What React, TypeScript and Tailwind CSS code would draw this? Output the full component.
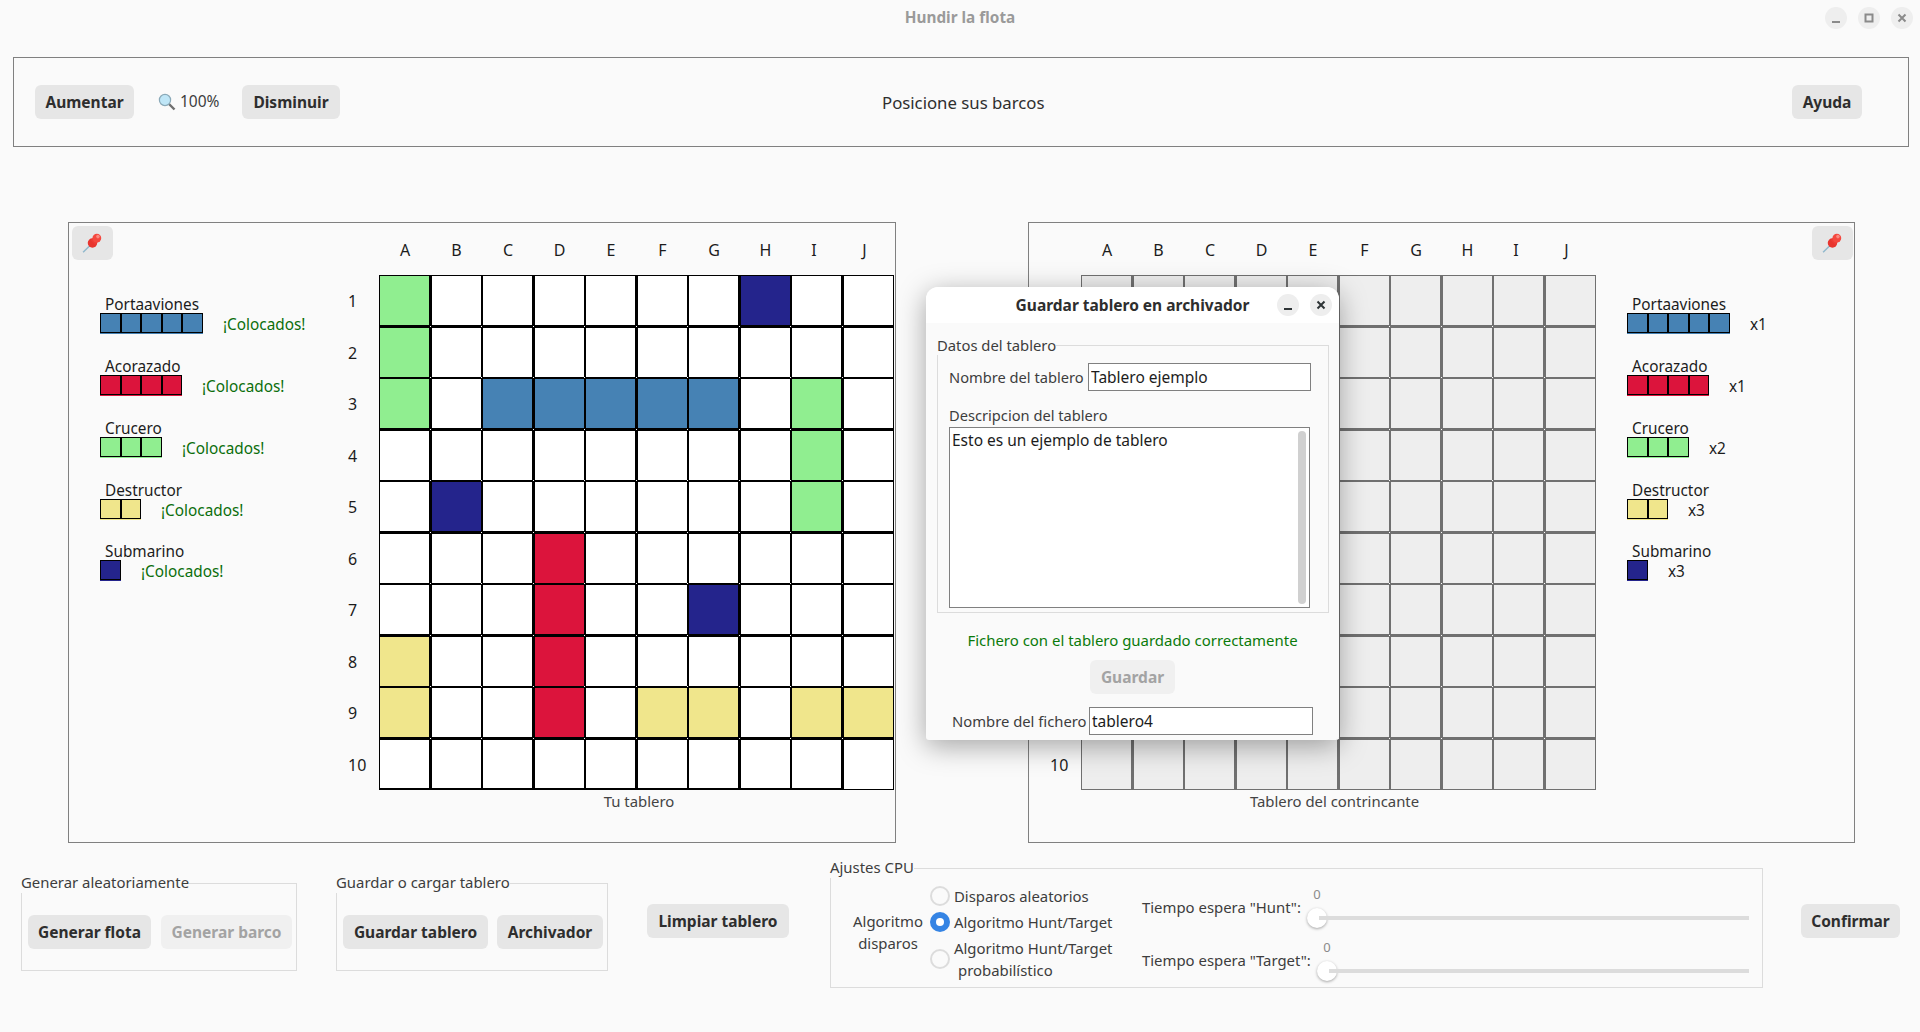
const LETTERS = ["A", "B", "C", "D", "E", "F", "G", "H", "I", "J"];

const FILLS: Record<string, string> = {
  g: "bg-[#90ee90]",
  b: "bg-[#4682b4]",
  r: "bg-[#dc143c]",
  y: "bg-[#f0e68c]",
  n: "bg-[#24248c]",
};

const MY_BOARD = [
  "g......n..",
  "g.........",
  "g.bbbbb.g.",
  "........g.",
  ".n......g.",
  "...r......",
  "...r..n...",
  "y..r......",
  "y..r.yy.yy",
  "..........",
];

const SHIPS = [
  { name: "Portaaviones", size: 5, fill: "b", count: "x1" },
  { name: "Acorazado", size: 4, fill: "r", count: "x1" },
  { name: "Crucero", size: 3, fill: "g", count: "x2" },
  { name: "Destructor", size: 2, fill: "y", count: "x3" },
  { name: "Submarino", size: 1, fill: "n", count: "x3" },
];

function Btn({ children, disabled, className }: { children: React.ReactNode; disabled?: boolean; className: string }) {
  return (
    <button
      className={`h-[34px] pt-[2px] rounded-md flex items-center justify-center font-bold text-[15.5px] ${
        disabled ? "bg-[#f0f0f0] text-[#a3a3a3]" : "bg-[#e6e6e6] text-[#2e2e2e]"
      } ${className}`}
    >
      {children}
    </button>
  );
}

function WinIcon({ kind, color }: { kind: "min" | "max" | "close"; color: string }) {
  return (
    <span className="w-[22px] h-[22px] rounded-full bg-[#eeeeee] flex items-center justify-center">
      <svg width="12" height="12" viewBox="0 0 12 12" fill="none" stroke={color} strokeWidth="2">
        {kind === "min" && <path d="M2 10h8" />}
        {kind === "max" && <rect x="2.5" y="2.5" width="7" height="7" />}
        {kind === "close" && <path d="M2.5 2.5l7 7M9.5 2.5l-7 7" />}
      </svg>
    </span>
  );
}

function PinButton({ className }: { className: string }) {
  return (
    <button className={`w-[41px] h-[34px] rounded-md bg-[#e6e6e6] flex items-center justify-center ${className}`}>
      <svg width="22" height="22" viewBox="0 0 20 20">
        <path d="M1 18.5l7-7" stroke="#8fb8cc" strokeWidth="1.3" />
        <circle cx="9.5" cy="10" r="4.3" fill="#e8352e" />
        <path d="M8 7.5l4-4 4 4-4 4z" fill="#ee3b35" />
        <circle cx="13.5" cy="5.5" r="4" fill="#f4483f" />
        <circle cx="14.5" cy="4.2" r="1.6" fill="#fb8a80" />
      </svg>
    </button>
  );
}

function Ship({ size, fill }: { size: number; fill: string }) {
  const cells = Array.from({ length: size });
  return (
    <div className={`flex w-fit h-fit pb-px ${FILLS[fill]}`}>
      {cells.map((_, i) => (
        <div key={i} className={`h-[20px] border border-black ${i % 2 === 0 ? "w-[21px]" : "w-[20px]"}`} />
      ))}
    </div>
  );
}

function ShipList({ placed }: { placed?: boolean }) {
  return (
    <div className="flex flex-col gap-[23px] mt-[35px]">
      {SHIPS.map((ship) => (
        <div key={ship.name} className="last:-mt-px">
          <div className="h-[18px] leading-[18px] pl-[5px] text-[15.33px] text-[#1c1c1c]">{ship.name}</div>
          <div className="flex h-[21px]">
            <Ship size={ship.size} fill={ship.fill} />
            <span className={`ml-[20px] mt-px leading-[20px] text-[15.33px] ${placed ? "text-[#0b6e0b]" : "text-[#1c1c1c]"}`}>
              {placed ? "¡Colocados!" : ship.count}
            </span>
          </div>
        </div>
      ))}
    </div>
  );
}

function Board({ rows, enemy, caption, captionClass }: { rows?: string[]; enemy?: boolean; caption: string; captionClass: string }) {
  const line = enemy ? "border-[#707070]" : "border-black";
  return (
    <div className="flex flex-col w-[556px]">
      <div className="flex pl-[41px] pt-[17px] h-[52px] text-[16px] text-[#1c1c1c]">
        {LETTERS.map((l, c) => (
          <span
            key={l}
            className={`h-[20px] leading-[20px] text-center ${c % 2 === 0 ? "w-[52px]" : "w-[51px]"} ${
              l === "I" ? "pr-[6px]" : l === "J" ? "pr-[8px]" : ""
            }`}
          >
            {l}
          </span>
        ))}
      </div>
      {Array.from({ length: 10 }).map((_, r) => (
        <div key={r} className="flex">
          <span
            className={`w-[41px] pl-[10px] flex items-center text-[16px] text-[#1c1c1c] ${
              r % 2 === 0 ? "h-[52px]" : "h-[51px]"
            }`}
          >
            {r + 1}
          </span>
          {LETTERS.map((l, c) => {
            const mark = rows ? rows[r][c] : ".";
            const bg = mark === "." ? (enemy ? "bg-[#eeeeee]" : "bg-white") : FILLS[mark];
            return (
              <div
                key={l}
                className={`relative border ${line} ${bg} ${c % 2 === 0 ? "w-[52px] border-r-2" : "w-[51px]"} ${
                  r % 2 === 0 ? "h-[52px] border-b-2" : "h-[51px]"
                } ${r === 9 && c < 9 && !enemy ? "border-b-2" : ""}`}
              >
                {r < 9 && c < 9 && (
                  <span
                    className={`absolute w-px h-px bg-white ${c % 2 === 0 ? "-right-[2px]" : "-right-px"} ${
                      r % 2 === 0 ? "-bottom-[2px]" : "-bottom-px"
                    }`}
                  />
                )}
              </div>
            );
          })}
        </div>
      ))}
      <div className={`mt-px h-[20px] leading-[20px] text-center text-[14.9px] text-[#444444] ${captionClass}`}>{caption}</div>
    </div>
  );
}

function Radio({ checked }: { checked?: boolean }) {
  if (checked) {
    return (
      <span className="w-[20px] h-[20px] rounded-full bg-[#3584e4] flex items-center justify-center shrink-0">
        <span className="w-[8px] h-[8px] rounded-full bg-white" />
      </span>
    );
  }
  return <span className="w-[20px] h-[20px] rounded-full border-2 border-[#dcdcdc] bg-[#fafafa] shrink-0" />;
}

function Slider({ label, labelWidth }: { label: string; labelWidth: string }) {
  return (
    <div className="flex">
      <span className={`mt-[13px] h-[20px] leading-[20px] text-[#3d3d3d] whitespace-nowrap ${labelWidth}`}>{label}</span>
      <div className="flex-1 flex flex-col gap-[4px]">
        <span className="w-[20px] h-[20px] leading-[20px] text-center text-[13px] text-[#8a8a8a]">0</span>
        <div className="flex items-center">
          <span className="w-[20px] h-[20px] rounded-full bg-white shadow-[0_1px_3px_rgba(0,0,0,0.35)] shrink-0" />
          <span className="-ml-[8px] flex-1 h-[4px] bg-[#dcdcdc]" />
        </div>
      </div>
    </div>
  );
}

function SaveDialog() {
  return (
    <div className="absolute left-[926px] top-[287px] w-[413px] h-[453px] rounded-t-xl rounded-b-[3px] bg-[#fafafa] shadow-[0_6px_28px_rgba(0,0,0,0.35)] overflow-hidden text-[14.67px] text-[#3d3d3d]">
      <div className="h-[36px] pt-px bg-white flex items-center">
        <span className="w-[413px] text-center font-bold text-[15.5px] text-[#2e2e2e]">Guardar tablero en archivador</span>
        <div className="absolute right-[7px] top-[7px] flex gap-[11px]">
          <WinIcon kind="min" color="#2e3436" />
          <WinIcon kind="close" color="#2e3436" />
        </div>
      </div>
      <fieldset className="mx-[11px] mt-[12px] w-[392px] h-[278px] border border-[#dcdcdc] pl-[11px]">
        <legend className="h-[20px] leading-[20px] -ml-[12px] text-[14.8px]">Datos del tablero</legend>
        <div className="flex items-center mt-[8px]">
          <span className="w-[139px] whitespace-nowrap">Nombre del tablero</span>
          <input
            readOnly
            value="Tablero ejemplo"
            className="w-[223px] h-[28px] border border-[#808080] bg-white pl-[2px] text-[15.5px] text-[#1c1c1c] outline-none"
          />
        </div>
        <div className="mt-[14px] h-[20px] leading-[20px]">Descripcion del tablero</div>
        <div className="relative mt-[2px] w-[361px] h-[181px]">
          <textarea
            readOnly
            value="Esto es un ejemplo de tablero"
            className="w-full h-full resize-none border border-[#808080] bg-white pl-[2px] pt-px text-[15.5px] text-[#1c1c1c] outline-none"
          />
          <span className="absolute right-[4px] top-[4px] bottom-[4px] w-[8px] rounded-full bg-[#d0d0d0]" />
        </div>
      </fieldset>
      <div className="mt-[17px] h-[20px] leading-[20px] text-center text-[14.95px] text-[#0a7a0a]">Fichero con el tablero guardado correctamente</div>
      <Btn disabled className="mt-[10px] mx-auto w-[85px]">
        Guardar
      </Btn>
      <div className="flex items-center mt-[13px] ml-[26px]">
        <span className="w-[137px] whitespace-nowrap text-[14.8px]">Nombre del fichero</span>
        <input
          readOnly
          value="tablero4"
          className="w-[224px] h-[28px] border border-[#808080] bg-white pl-[2px] text-[15.5px] text-[#1c1c1c] outline-none"
        />
      </div>
    </div>
  );
}

export default function App() {
  return (
    <div className="relative w-[1920px] h-[1032px] overflow-hidden bg-[#fafafa] font-['Noto_Sans','Open_Sans',sans-serif] text-[14.9px]">
      {/* window title */}
      <div className="relative h-[36px] pb-px flex items-center justify-center font-bold text-[15.33px] text-[#9a9a9a]">
        Hundir la flota
        <div className="absolute right-[7px] top-[7px] flex gap-[11px]">
          <WinIcon kind="min" color="#8a8a8a" />
          <WinIcon kind="max" color="#8a8a8a" />
          <WinIcon kind="close" color="#8a8a8a" />
        </div>
      </div>

      {/* zoom toolbar */}
      <div className="mx-[13px] mt-[21px] w-[1896px] h-[90px] border border-[#808080] flex items-center pl-[21px] pr-[46px]">
        <Btn className="w-[99px]">Aumentar</Btn>
        <span className="ml-[24px] w-[84px] flex items-center gap-[4px] text-[15.5px] text-[#3d3d3d]">
          <svg width="18" height="18" viewBox="0 0 18 18">
            <path d="M10.5 10.5l6 6" stroke="#6f6f6f" strokeWidth="2.4" />
            <circle cx="7" cy="7" r="5.6" fill="#bfe6f7" stroke="#8aa9b8" strokeWidth="1.2" />
          </svg>
          100%
        </span>
        <Btn className="w-[98px]">Disminuir</Btn>
        <span className="ml-[542px] mt-px text-[#2e2e2e] text-[16.75px]">Posicione sus barcos</span>
        <Btn className="ml-auto w-[70px]">Ayuda</Btn>
      </div>

      {/* boards */}
      <div className="flex ml-[68px] mt-[75px] gap-[132px]">
        <div className="w-[828px] h-[621px] border border-[#808080] flex">
          <div className="w-[269px] pt-[3px] pl-[3px]">
            <PinButton className="" />
            <div className="pl-[28px]">
              <ShipList placed />
            </div>
          </div>
          <Board rows={MY_BOARD} caption="Tu tablero" captionClass="pl-[46px]" />
        </div>
        <div className="w-[827px] h-[621px] border border-[#808080] flex">
          <div className="ml-[11px]">
            <Board enemy caption="Tablero del contrincante" captionClass="pl-[33px]" />
          </div>
          <div className="flex-1 pt-[3px] pr-px pl-[31px] flex flex-col">
            <PinButton className="self-end" />
            <ShipList />
          </div>
        </div>
      </div>

      {/* bottom controls */}
      <div className="flex items-start mt-[15px] text-[#3d3d3d]">
        <fieldset className="ml-[21px] mt-[15px] w-[276px] h-[98px] border border-[#dcdcdc] pl-[6px]">
          <legend className="h-[20px] leading-[18px] -ml-[7px] text-[#3d3d3d]">Generar aleatoriamente</legend>
          <div className="flex gap-[10px] mt-[22px]">
            <Btn className="w-[123px]">Generar flota</Btn>
            <Btn disabled className="w-[131px]">
              Generar barco
            </Btn>
          </div>
        </fieldset>
        <fieldset className="ml-[39px] mt-[15px] w-[272px] h-[98px] border border-[#dcdcdc] pl-[6px]">
          <legend className="h-[20px] leading-[18px] -ml-[7px]">Guardar o cargar tablero</legend>
          <div className="flex gap-[9px] mt-[22px]">
            <Btn className="w-[145px]">Guardar tablero</Btn>
            <Btn className="w-[106px]">Archivador</Btn>
          </div>
        </fieldset>
        <Btn className="ml-[39px] mt-[46px] w-[142px]">Limpiar tablero</Btn>
        <fieldset className="ml-[41px] w-[933px] h-[130px] border border-[#dcdcdc] flex">
          <legend className="h-[20px] leading-[18px] -ml-px">Ajustes CPU</legend>
          <div className="flex">
            <div className="ml-[20px] w-[74px] mt-[32px] text-center leading-[22px]">
              <div>Algoritmo</div>
              <div>disparos</div>
            </div>
            <div className="ml-[5px] w-[212px] mt-[6px] flex flex-col gap-[2px]">
              <label className="flex items-center gap-[4px] h-[24px]">
                <Radio />
                Disparos aleatorios
              </label>
              <label className="flex items-center gap-[4px] h-[24px]">
                <Radio checked />
                Algoritmo Hunt/Target
              </label>
              <label className="flex items-center gap-[4px] h-[46px]">
                <Radio />
                <span className="leading-[22px]">
                  Algoritmo Hunt/Target
                  <br />
                  <span className="pl-[4px]">probabilístico</span>
                </span>
              </label>
            </div>
            <div className="mt-[6px] w-[607px] flex flex-col gap-[9px]">
              <Slider label={'Tiempo espera "Hunt":'} labelWidth="w-[165px]" />
              <Slider label={'Tiempo espera "Target":'} labelWidth="w-[175px]" />
            </div>
          </div>
        </fieldset>
        <Btn className="ml-[38px] mt-[46px] w-[99px]">Confirmar</Btn>
      </div>

      <SaveDialog />
    </div>
  );
}
